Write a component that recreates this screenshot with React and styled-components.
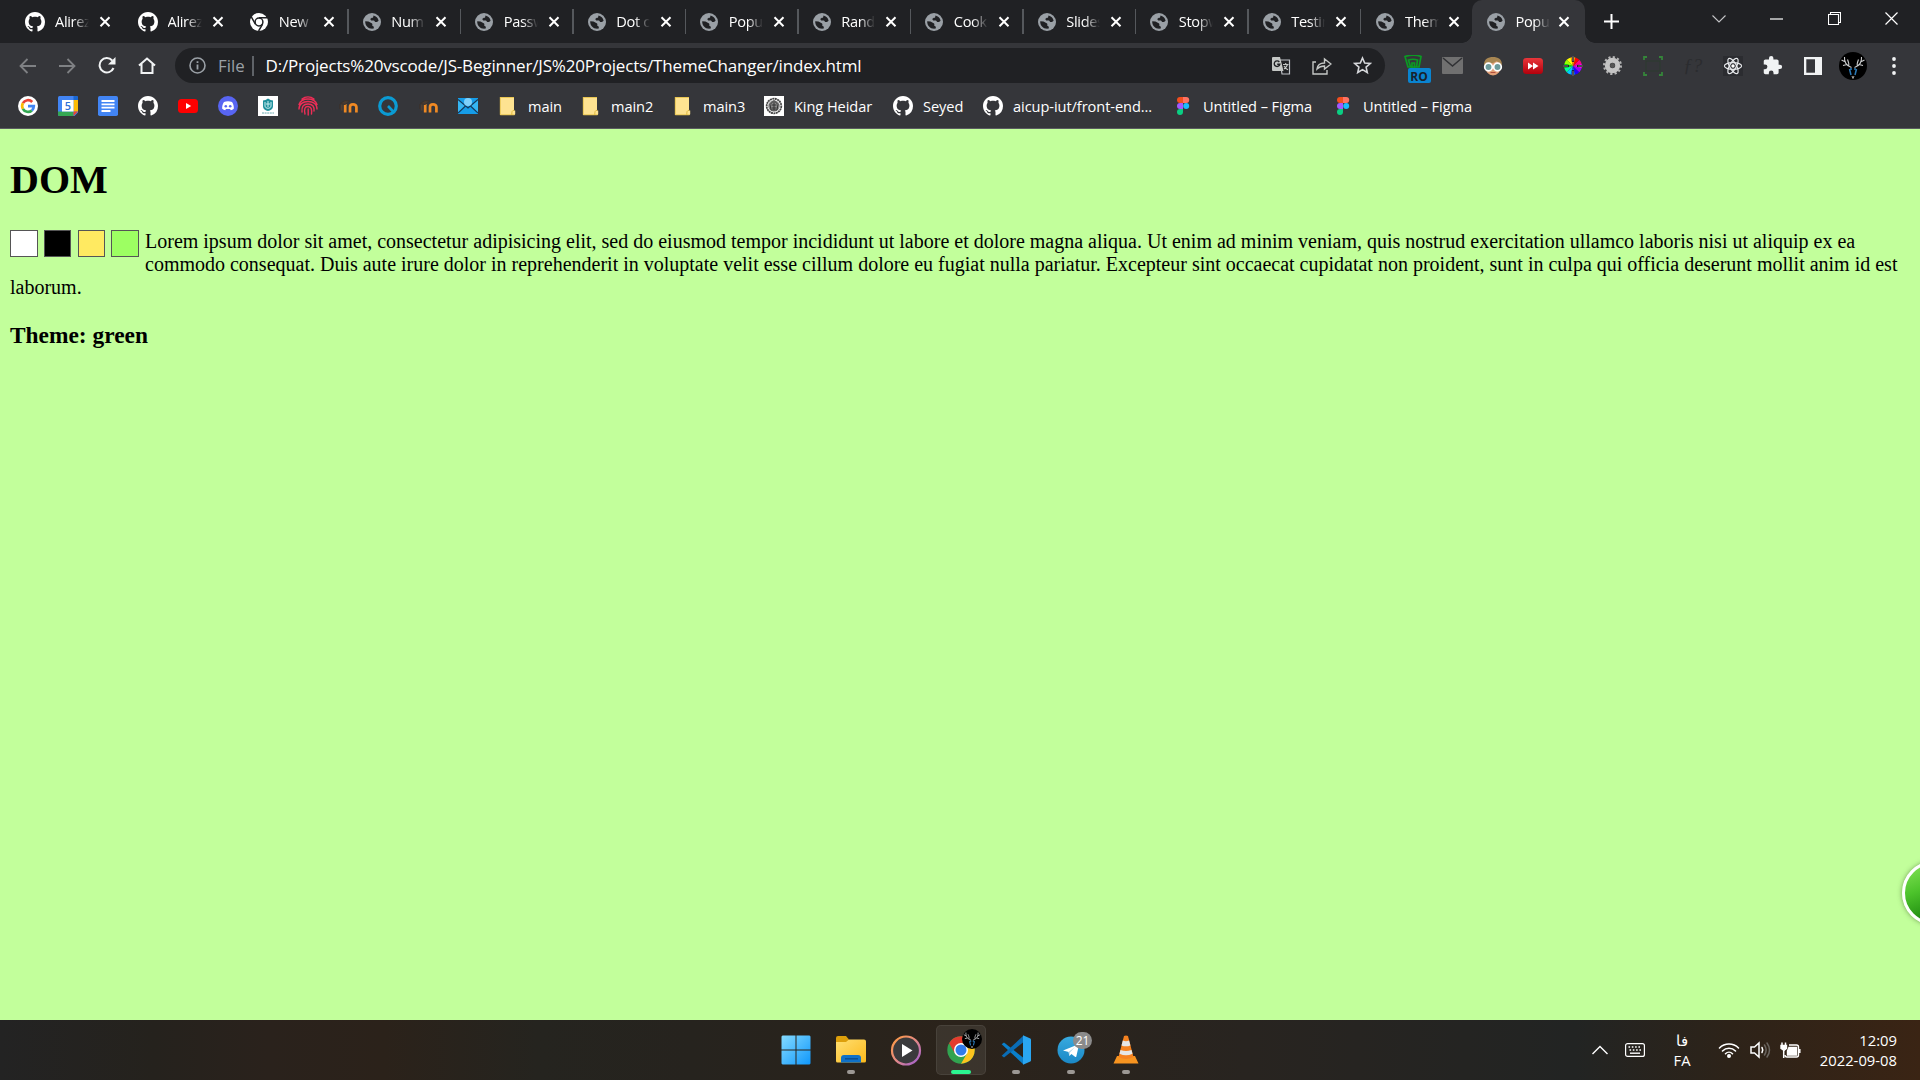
import React from "react";
import styled, { createGlobalStyle } from "styled-components";

const Global = createGlobalStyle`
  * { box-sizing: border-box; }
  html, body { margin: 0; padding: 0; overflow: hidden; }
  svg { display: block; flex: none; }
`;

const ui = `"Open Sans", "Noto Sans", sans-serif`;

const Screen = styled.div`
  width: 1920px;
  height: 1080px;
  display: flex;
  flex-direction: column;
  overflow: hidden;
  background: #202124;
  font-family: ${ui};
  color: #fff;
`;

/* ---------- tab strip ---------- */
const TabStrip = styled.div`
  height: 43px;
  flex: none;
  display: flex;
  align-items: stretch;
  padding-left: 11px;
  background: #202124;
`;
const Tab = styled.div`
  width: ${(p) => (p.$active ? 113 : p.$last ? 110.5 : 112.5)}px;
  height: 43px;
  flex: none;
  display: flex;
  align-items: center;
  padding-left: 14px;
  color: #fff;
  background: ${(p) => (p.$active ? "#35363a" : "transparent")};
  border-radius: ${(p) => (p.$active ? "10px 10px 0 0" : "0")};
  position: relative;
  &::before, &::after {
    content: "";
    display: ${(p) => (p.$active ? "block" : "none")};
    position: absolute;
    bottom: 0;
    width: 10px;
    height: 10px;
  }
  &::before { left: -10px; background: radial-gradient(circle at 0 0, transparent 9.5px, #35363a 10px); }
  &::after { right: -10px; background: radial-gradient(circle at 100% 0, transparent 9.5px, #35363a 10px); }
`;
const TabIcon = styled.span`
  width: 20px;
  height: 20px;
  display: flex;
  align-items: center;
  justify-content: center;
`;
const TabTitle = styled.span`
  width: 34px;
  flex: none;
  margin-left: 10px;
  white-space: nowrap;
  font-size: 14.6px;
  letter-spacing: -0.35px;
  line-height: 22px;
  padding-bottom: 2px;
  mask-image: linear-gradient(to right, #000 55%, transparent 100%);
`;
const TabClose = styled.span`
  margin-left: ${(p) => (p.$tight ? 8.5 : 10)}px;
  width: 12px;
`;
const TabDivider = styled.span`
  width: 1.25px;
  height: 25px;
  margin-left: 12.5px;
  background: #55585c;
`;
const NewTab = styled.div`
  width: 54px;
  display: flex;
  align-items: center;
  justify-content: center;
`;
const WindowButtons = styled.div`
  margin-left: auto;
  display: flex;
  height: 37px;
  align-items: center;
`;
const WindowButton = styled.span`
  width: 57.3px;
  display: flex;
  justify-content: center;
`;

/* ---------- toolbar ---------- */
const Toolbar = styled.div`
  height: 45px;
  flex: none;
  display: flex;
  align-items: center;
  background: #35363a;
  padding-left: 7px;
`;
const NavButton = styled.span`
  width: 40px;
  flex: none;
  display: flex;
  justify-content: center;
`;
const Omnibox = styled.div`
  width: 1210px;
  flex: none;
  height: 35px;
  margin-left: 8px;
  border-radius: 18px;
  background: #202124;
  display: flex;
  align-items: center;
  padding: 0 13px 0 14px;
`;
const Scheme = styled.span`
  margin-left: 12px;
  width: 27px;
  color: #9aa0a6;
  white-space: nowrap;
  font-size: 16.8px;
`;
const SchemeBar = styled.span`
  width: 1.5px;
  height: 20px;
  margin: 0 12px 0 7px;
  background: #5f6368;
`;
const Url = styled.span`
  white-space: nowrap;
  font-size: 17px;
  letter-spacing: -0.165px;
`;
const OmniActions = styled.span`
  margin-left: auto;
  display: flex;
  gap: 21px;
  align-items: center;
`;
const Extensions = styled.div`
  display: flex;
  align-items: center;
  flex: none;
  margin-left: 7.7px;
`;
const Extension = styled.span`
  width: 40px;
  display: flex;
  justify-content: ${(p) => (p.$badge ? "flex-end" : "center")};
  padding: ${(p) => (p.$badge ? "7px 2px 0 0" : "0")};
`;
const Avatar = styled.span`
  width: 41px;
  display: flex;
  justify-content: center;
`;

/* ---------- bookmarks ---------- */
const Bookmarks = styled.div`
  height: 41px;
  flex: none;
  display: flex;
  align-items: center;
  gap: 20px;
  padding: 0 0 4px 18px;
  background: #35363a;
  border-bottom: 1px solid #5a5c5f;
`;
const Bookmark = styled.span`
  display: flex;
  align-items: center;
  gap: 10px;
  flex: none;
`;
const BookmarkLabel = styled.span`
  width: ${(p) => p.$w}px;
  white-space: nowrap;
  font-size: 14.6px;
  letter-spacing: -0.07px;
  line-height: 20px;
  padding-bottom: 1px;
`;

/* ---------- web page ---------- */
const Page = styled.main`
  flex: 1;
  background: #c2ff9b;
  color: #000;
  padding: 28px 10px 0;
  font-family: "Liberation Serif", "Times New Roman", serif;
  font-size: 20px;
  overflow: hidden;
  position: relative;
`;
const Heading = styled.h1`
  margin: 0 0 27px;
  font-size: 40px;
  line-height: 46px;
`;
const Swatches = styled.div`
  float: left;
  display: flex;
  gap: 6.25px;
  width: 135px;
  height: 27px;
`;
const Swatch = styled.button`
  width: 27.5px;
  flex: none;
  height: 27px;
  padding: 0;
  border: 1px solid #555;
  background: ${(p) => p.$color};
`;
const Paragraph = styled.p`
  margin: 0 0 23px;
  line-height: 23px;
`;
const ThemeLine = styled.h3`
  margin: 0;
  font-size: 23.4px;
  line-height: 27px;
`;
const FloatingOrb = styled.span`
  position: absolute;
  left: 1902px;
  top: 732px;
  width: 64px;
  height: 64px;
  border-radius: 50%;
  border: 3px solid #fff;
  background: linear-gradient(160deg, #86e458 0%, #4cc32b 40%, #239012 75%);
  box-shadow: 0 0 5px rgba(60, 90, 40, 0.6);
`;

/* ---------- taskbar ---------- */
const Taskbar = styled.footer`
  height: 60px;
  flex: none;
  display: flex;
  align-items: center;
  padding-left: 771px;
  background: linear-gradient(90deg, #232323 0%, #25221d 8%, #2a221c 14%, #2b221a 20%, #25241f 28%, #26231e 36%, #2b231b 50%, #282420 65%, #222423 82%, #2d2319 90%, #3a2414 100%);
`;
const TaskApp = styled.span`
  width: 50px;
  height: 50px;
  margin-right: 5px;
  display: flex;
  flex-direction: column;
  align-items: center;
  position: relative;
  padding-top: 10px;
  border-radius: 5px;
  background: ${(p) => (p.$active ? "rgba(255,255,255,0.08)" : "transparent")};
  box-shadow: ${(p) => (p.$active ? "inset 0 0 0 1px rgba(255,255,255,0.07)" : "none")};
`;
const Running = styled.i`
  position: absolute;
  bottom: 1px;
  width: ${(p) => (p.$active ? 20 : 8)}px;
  height: 4px;
  border-radius: 2px;
  background: ${(p) => (p.$active ? "#2bf590" : "#9c9894")};
`;
const CountBadge = styled.b`
  position: absolute;
  top: 7px;
  left: 27px;
  width: 19px;
  height: 17px;
  border-radius: 9px;
  background: #8b8b8b;
  font-size: 12px;
  font-weight: 400;
  line-height: 17px;
  text-align: center;
`;
const AvatarBadge = styled.b`
  position: absolute;
  top: 4px;
  left: 26px;
`;
const Tray = styled.div`
  margin-left: auto;
  display: flex;
  align-items: center;
  padding-right: 23px;
  height: 60px;
`;
const TrayIcon = styled.span`
  width: ${(p) => p.$w}px;
  display: flex;
  justify-content: center;
`;
const Stack = styled.div`
  width: ${(p) => p.$w}px;
  text-align: ${(p) => p.$align};
  font-size: 14.8px;
  line-height: 20px;
  white-space: nowrap;
  padding-bottom: 1px;
`;

/* ---------- icons ---------- */
const GitHub = ({ s = 20 }) => (
  <svg width={s} height={s} viewBox="0 0 16 16" fill="#fff">
    <path d="M8 0C3.58 0 0 3.58 0 8c0 3.54 2.29 6.53 5.47 7.59.4.07.55-.17.55-.38 0-.19-.01-.82-.01-1.49-2.01.37-2.53-.49-2.69-.94-.09-.23-.48-.94-.82-1.13-.28-.15-.68-.52-.01-.53.63-.01 1.08.58 1.23.82.72 1.21 1.87.87 2.33.66.07-.52.28-.87.51-1.07-1.78-.2-3.64-.89-3.64-3.95 0-.87.31-1.59.82-2.15-.08-.2-.36-1.02.08-2.12 0 0 .67-.21 2.2.82.64-.18 1.32-.27 2-.27s1.36.09 2 .27c1.53-1.04 2.2-.82 2.2-.82.44 1.1.16 1.92.08 2.12.51.56.82 1.27.82 2.15 0 3.07-1.87 3.75-3.65 3.95.29.25.54.73.54 1.48 0 1.07-.01 1.93-.01 2.2 0 .21.15.46.55.38A8.01 8.01 0 0 0 16 8c0-4.42-3.58-8-8-8z" />
  </svg>
);
const Globe = () => (
  <svg width="18" height="18" viewBox="0 0 18 18">
    <circle cx="9" cy="9" r="9" fill="#9aa0a6" />
    <path d="M10.500 2.500c2.500.5 4.600 2.500 5.100 5.200l-1.600 1.300h-1.800L11 7.500H8.200l-1-1.500 1.600-1.200h1.200z" fill="#202124" />
    <path d="M2.200 8.200l3.300.4 3.200 1.600c1 .5.900 1.400.3 2.100l1.800 1.400v1.800C5.800 16.400 2 13 2.200 8.200z" fill="#202124" />
  </svg>
);
const ChromeMono = () => (
  <svg width="18" height="18" viewBox="0 0 18 18">
    <circle cx="9" cy="9" r="9" fill="#fff" />
    <circle cx="9" cy="9" r="3.9" fill="none" stroke="#202124" strokeWidth="1.500" />
    <path d="M9 4.800h8.500M5.400 11.200 1.300 3.800M12.600 11.200 8.600 18" stroke="#202124" strokeWidth="1.500" />
  </svg>
);
const Close = () => (
  <svg width="12" height="12" viewBox="0 0 12 12">
    <path d="M1.500 1.200l9 9M10.500 1.200l-9 9" stroke="#fff" strokeWidth="2" />
  </svg>
);
const Line = ({ w = 20, h = 20, d, c = "#f1f3f4", sw = 2, fill = "none", vb }) => (
  <svg width={w} height={h} viewBox={vb || `0 0 ${w} ${h}`} fill={fill}>
    <path d={d} stroke={c} strokeWidth={sw} />
  </svg>
);
const Info = () => (
  <svg width="17" height="17" viewBox="0 0 17 17" fill="none">
    <circle cx="8.5" cy="8.5" r="7.500" stroke="#9aa0a6" strokeWidth="1.600" />
    <path d="M8.500 7.500v5M8.500 4.300v1.800" stroke="#9aa0a6" strokeWidth="1.800" />
  </svg>
);
const Translate = () => (
  <svg width="19" height="18" viewBox="0 0 19 18">
    <path d="M8 3h9.500v14H10z" fill="#202124" stroke="#bdc1c6" strokeWidth="1.200" />
    <path d="M1 0h7l3.500 14H1a1 1 0 0 1-1-1V1a1 1 0 0 1 1-1z" fill="#c4c7c5" />
    <path d="M7.300 5A2.800 2.800 0 1 0 7.800 7.300H5.200" fill="none" stroke="#202124" strokeWidth="1.400" />
    <path d="M11 7.500h5.500M13.700 6v1.500M15.500 7.500c-.5 2-2 3.500-3.500 4.500M12 9c.8 1.500 2.500 3 4 3.700" fill="none" stroke="#c4c7c5" strokeWidth="1.100" />
  </svg>
);
const Share = () => (
  <svg width="20" height="18" viewBox="0 0 20 18" fill="none" stroke="#c4c7c5" strokeWidth="1.400">
    <path d="M4 5H1v12h14v-4M5 12c.5-4 3-6 7.500-6V2L19 7l-6.500 5V9C9 9 7 10 5 12z" />
  </svg>
);
const Star = () => (
  <svg width="19" height="19" viewBox="0 0 19 19" fill="none" stroke="#d5d7da" strokeWidth="1.600">
    <path d="M9.500 2l2.200 5 5.500.5-4.100 3.600 1.200 5.400-4.800-2.900-4.800 2.900 1.200-5.400L1.800 7.500l5.500-.5z" />
  </svg>
);
const Sniffer = () => (
  <svg width="27" height="28" viewBox="0 0 27 28">
    <path d="M1 1.500c5-1.500 12-1.500 16 0l-2 10.500H4zM4.500 5c3-1 6-1 9 0l-1 7h-6zM8 13V8h2.500v5" fill="none" stroke="#0b9b24" strokeWidth="1.700" />
    <rect x="4" y="13" width="23" height="15" rx="2" fill="#0a84d0" />
    <text x="15" y="25.500" textAnchor="middle" fontSize="12" fontWeight="700" fontFamily="Open Sans" fill="#18222c">RO</text>
  </svg>
);
const Mail = () => (
  <svg width="21" height="17" viewBox="0 0 21 17">
    <rect width="21" height="17" rx="1" fill="#707070" />
    <path d="M1 1l9.500 8L20 1" fill="none" stroke="#303134" strokeWidth="1.500" />
  </svg>
);
const Face = () => (
  <svg width="20" height="20" viewBox="0 0 20 20">
    <ellipse cx="10" cy="10.500" rx="8" ry="9" fill="#e3a077" />
    <path d="M1 9C1 3 5 1 10 1s9 2 9 8l-3-1-2-3-4 2-5 1z" fill="#a78652" />
    <circle cx="5.500" cy="11" r="3.800" fill="#6d9b9b" stroke="#fff" strokeWidth="1.700" />
    <circle cx="14.500" cy="11" r="3.800" fill="#6d9b9b" stroke="#fff" strokeWidth="1.700" />
    <path d="M7.500 16.500h5" stroke="#b34f3e" />
  </svg>
);
const FastForward = () => (
  <svg width="20" height="16" viewBox="0 0 20 16">
    <defs><linearGradient id="ff" x2="0" y2="1"><stop stopColor="#e8363a" /><stop offset="1" stopColor="#b3000c" /></linearGradient></defs>
    <rect width="20" height="16" rx="3.500" fill="url(#ff)" />
    <path d="M5 4.500l5 3.500-5 3.500zM10 4.500l5.500 3.500-5.500 3.500z" fill="#fff" />
  </svg>
);
const wheelColors = ["#ff0", "#9f0", "#0e0", "#0f9", "#0cf", "#06f", "#20f", "#90f", "#f0f", "#f08", "#f00", "#f90"];
const ColorWheel = () => (
  <svg width="20" height="20" viewBox="-10 -10 20 20">
    {wheelColors.map((c, i) => (
      <path key={c} d="M0 0L-2.300 -8.600A9 9 0 0 1 2.300 -8.600z" fill={c} transform={`rotate(${-30 * i - 30})`} />
    ))}
    <path d="M0-10v6M0 10V4M-10 0h6M10 0H4" stroke="#222" strokeWidth="1.800" />
    <path d="M0-10v5M0 10V5M-10 0h5M10 0H5" stroke="#bbb" strokeWidth=".6" />
  </svg>
);
const Gear = () => (
  <svg width="19" height="19" viewBox="-9.500 -9.500 19 19">
    <circle r="8.400" fill="none" stroke="#b5b5b5" strokeWidth="2.200" strokeDasharray="2.200 2.200" />
    <circle r="5.200" fill="none" stroke="#c4c4c4" strokeWidth="5" />
    <circle r="2.400" fill="#555" />
  </svg>
);
const Corners = () => (
  <svg width="20" height="20" viewBox="0 0 20 20" fill="none">
    <path d="M1 4V1h3M16 1h3v3M19 16v3h-3M4 19H1v-3" stroke="#35843a" strokeWidth="1.800" />
    <rect x="3" y="5" width="14" height="10" stroke="#2c3a2f" strokeWidth="1" />
  </svg>
);
const FnText = styled.em`
  font: italic 19px "Liberation Serif", serif;
  color: #2b2c2f;
`;
const ReactLogo = () => (
  <svg width="20" height="20" viewBox="-10 -10 20 20">
    <rect x="-10" y="-10" width="20" height="20" fill="#2b2c30" />
    <g fill="none" stroke="#e8eaed" strokeWidth="1.200">
      <ellipse rx="8.600" ry="3.300" />
      <ellipse rx="8.600" ry="3.300" transform="rotate(60)" />
      <ellipse rx="8.600" ry="3.300" transform="rotate(120)" />
    </g>
    <circle r="1.700" fill="#fff" />
  </svg>
);
const Puzzle = () => (
  <svg width="21" height="21" viewBox="0 0 24 24" fill="#f1f3f4">
    <path d="M20.500 11H19V7c0-1.100-.9-2-2-2h-4V3.500a2.500 2.500 0 0 0-5 0V5H4c-1.100 0-2 .9-2 2v3.800h1.500a2.700 2.700 0 0 1 0 5.400H2V20c0 1.100.9 2 2 2h3.800v-1.500a2.700 2.700 0 0 1 5.400 0V22H17c1.100 0 2-.9 2-2v-4h1.500a2.500 2.500 0 0 0 0-5z" />
  </svg>
);
const SidePanel = () => (
  <svg width="18" height="18" viewBox="0 0 18 18">
    <rect width="18" height="18" fill="#f1f3f4" />
    <rect x="2.300" y="2.300" width="8.700" height="13.400" fill="#35363a" />
  </svg>
);
const Deer = ({ s = 28 }) => (
  <svg width={s} height={s} viewBox="0 0 28 28" fill="none">
    <circle cx="14" cy="14" r="14" fill="#000" />
    <path d="M12.500 15.500C8 14 5 11 5.500 5M6.500 10L2.500 8M8 12.500L4 13.500M9.500 14c1-2 0-4-1-6.500M15.500 15.500c4.500-1.500 7.500-4.500 7-10.500M21.500 10l4-2M20 12.500l4 1M18.500 14c-1-2 0-4 1-6.500" stroke="#c9cbcc" strokeWidth="1.100" />
    <path d="M10.500 17l1.500 6M17.500 17L16 23M11 17h2M15 17h2" stroke="#2a7ab8" strokeWidth="1.500" />
    <path d="M13 24l1 2.500 1-2.500" stroke="#aaa" />
  </svg>
);
const Dots = () => (
  <svg width="4" height="18" viewBox="0 0 4 18" fill="#f1f3f4">
    <circle cx="2" cy="2" r="1.900" /><circle cx="2" cy="9" r="1.900" /><circle cx="2" cy="16" r="1.900" />
  </svg>
);
const Google = () => (
  <svg width="20" height="20" viewBox="0 0 20 20">
    <circle cx="10" cy="10" r="10" fill="#fff" />
    <g fill="none" strokeWidth="2.700">
      <path d="M4.900 7.200A5.800 5.800 0 0 1 14.200 6" stroke="#ea4335" />
      <path d="M4.900 7.200a5.800 5.800 0 0 0 0 5.600" stroke="#fbbc05" />
      <path d="M4.900 12.800a5.800 5.800 0 0 0 9 1.600" stroke="#34a853" />
      <path d="M10 10.200h5.800a5.800 5.800 0 0 1-1.900 4.200" stroke="#4285f4" />
    </g>
  </svg>
);
const Calendar = () => (
  <svg width="20" height="20" viewBox="0 0 20 20">
    <rect width="20" height="20" rx="1.500" fill="#4285f4" />
    <path d="M15.500 0H18.500a1.500 1.500 0 0 1 1.500 1.500V4h-4.500z" fill="#1967d2" />
    <path d="M15.500 4H20v11.500h-4.500z" fill="#fbbc04" />
    <path d="M0 15.500h15.500V20H1.500A1.500 1.500 0 0 1 0 18.500z" fill="#34a853" />
    <path d="M15.500 15.500H20L15.500 20z" fill="#ea4335" />
    <path d="M16.500 20L20 16.500V20z" fill="#35363a" />
    <rect x="4" y="4" width="11.500" height="11.500" fill="#fff" />
    <text x="9.800" y="13.800" textAnchor="middle" fontSize="11" fontWeight="600" fontFamily="Open Sans" fill="#2f6fd6">5</text>
  </svg>
);
const Docs = () => (
  <svg width="20" height="20" viewBox="0 0 20 20">
    <rect width="20" height="20" rx="1.800" fill="#4285f4" />
    <path d="M3.500 5h13M3.500 8.300h13M3.500 11.700h13M3.500 15h9" stroke="#fff" strokeWidth="1.800" />
  </svg>
);
const YouTube = () => (
  <svg width="20" height="20" viewBox="0 0 20 20">
    <rect y="3" width="20" height="14" rx="3.500" fill="#f00" />
    <path d="M8 7l5.200 3L8 13z" fill="#fff" />
  </svg>
);
const Discord = () => (
  <svg width="20" height="20" viewBox="0 0 20 20">
    <circle cx="10" cy="10" r="10" fill="#5865f2" />
    <path d="M6 6c2.500-1 5.500-1 8 0 1.400 2 2 4.300 1.800 6.800-1 .9-2 1.300-3 1.500l-.8-1.300H8l-.8 1.300c-1-.2-2-.6-3-1.500C4 10.300 4.600 8 6 6z" fill="#fff" />
    <circle cx="7.800" cy="10.200" r="1.300" fill="#5865f2" /><circle cx="12.200" cy="10.200" r="1.300" fill="#5865f2" />
  </svg>
);
const Crest = () => (
  <svg width="20" height="20" viewBox="0 0 20 20">
    <rect width="20" height="20" fill="#fff" />
    <path d="M5 4.500l2.500-.5L10 2.500 12.500 4l2.500.5v6c0 2.500-2.500 4-5 4.500-2.500-.5-5-2-5-4.500z" fill="#20909c" />
    <path d="M7 6v4c0 3 6 3 6 0V6M10 5v6M8 8h4" stroke="#c9eef0" fill="none" />
    <path d="M4 17h12" stroke="#6aa9af" strokeDasharray="2 .6" />
  </svg>
);
const Fingerprint = () => (
  <svg width="20" height="20" viewBox="0 0 20 20" fill="none" stroke="#ef2d56" strokeWidth="1.400" strokeLinecap="round">
    <path d="M4 3a9.500 9.500 0 0 1 12 0M1 8.500c1.500-4 5-5.500 9-5.500s7.500 1.500 9 5.500M1 13c0-5 4-7.500 9-7.500s9 2.500 9 7.500M4 16c-.5-5 1-8 6-8s6.500 3 6 7M7 18c-1-5-.3-7.500 3-7.500s4 3 3.500 7.500M10.200 13v6" />
  </svg>
);
const Moodle = () => (
  <svg width="20" height="20" viewBox="0 0 20 20" fill="none">
    <path d="M12 16.500V11q0-2.600 3-2.600t3.400 2.600v5.500M7.200 8v8.500" stroke="#f08a24" strokeWidth="2.700" />
    <path d="M2 7.500l5-3L12 5 7 8.500zM1.500 8v5" stroke="#39322e" fill="#4a3b31" strokeWidth="1" />
    <path d="M3.700 8.500v6" stroke="#56402f" strokeWidth="1.800" />
  </svg>
);
const QLogo = () => (
  <svg width="20" height="20" viewBox="0 0 20 20" fill="none" stroke="#0b9bd3">
    <circle cx="10" cy="10" r="8.300" strokeWidth="3.200" />
    <path d="M10 10l6.500 7" strokeWidth="2.600" />
  </svg>
);
const MailBlue = () => (
  <svg width="20" height="20" viewBox="0 0 20 20">
    <rect y="2" width="20" height="16" fill="#169de8" />
    <path d="M0 3l8 7-8 7zM20 3l-8 7 8 7z" fill="#35b6f3" />
    <path d="M0 3.500L10 12l10-8.500M0 17l7.500-7M20 17l-7.500-7" stroke="#15395b" strokeWidth="1.200" fill="none" />
    <circle cx="10" cy="6" r="4" fill="#7fd0fa" />
  </svg>
);
const FolderDoc = () => (
  <svg width="20" height="20" viewBox="0 0 20 20">
    <path d="M2 1h14v13.500h1.200V18a1 1 0 0 1-1 1H2z" fill="#fee391" />
    <path d="M2 1.500h14M2.300 1v17.800H16.500" stroke="#e6c34c" fill="none" strokeWidth=".9" />
    <path d="M16.300 14.300c-2.300 0-2.500 1.200-2.500 4.500" stroke="#e0b93c" fill="none" />
  </svg>
);
const Seal = () => (
  <svg width="20" height="20" viewBox="0 0 20 20" fill="none">
    <rect width="20" height="20" fill="#fff" />
    <circle cx="10" cy="10" r="7.300" stroke="#444" strokeWidth="1.800" strokeDasharray="2 .5" />
    <circle cx="10" cy="10" r="5.800" fill="#888" />
    <path d="M10 4.500l4 4-1 5.500H7L6 8.500zM10 6v8M7.500 9h5M7.500 12h5" stroke="#333" />
  </svg>
);
const Figma = () => (
  <svg width="20" height="20" viewBox="0 0 20 20">
    <path d="M10 1H7a3 3 0 0 0 0 6h3z" fill="#f24e1e" /><path d="M10 1h3.200a3 3 0 0 1 0 6H10z" fill="#ff7262" />
    <path d="M10 7H7a3 3 0 0 0 0 6h3z" fill="#a259ff" /><circle cx="13.200" cy="10" r="3" fill="#1abcfe" />
    <path d="M10 13H7a3 3 0 1 0 3 3z" fill="#0acf83" />
  </svg>
);
const WinLogo = () => (
  <svg width="30" height="30" viewBox="0 0 30 30">
    <defs><linearGradient id="wn" gradientUnits="userSpaceOnUse" x1="0" y1="0" x2="30" y2="30"><stop stopColor="#87dcff" /><stop offset="1" stopColor="#0d96fb" /></linearGradient></defs>
    <path d="M1.500.5h13v14H.5v-13zM15.500.5h13l1 1v13h-14zM.5 15.500h14v14h-13l-1-1zM15.500 15.500h14v13l-1 1h-13z" fill="url(#wn)" />
  </svg>
);
const Explorer = () => (
  <svg width="32" height="30" viewBox="0 0 32 30">
    <defs><linearGradient id="ex" x2="1" y2="1"><stop stopColor="#ffdf71" /><stop offset="1" stopColor="#fbb91c" /></linearGradient></defs>
    <path d="M1 3q0-2 2-2h8l3 3.500V8H1z" fill="#dd9f0b" />
    <path d="M1 7h10l3-2.500h15q2 0 2 2V26q0 1.500-1.500 1.500h-27Q1 27.500 1 26z" fill="url(#ex)" />
    <path d="M6 27.500V23q0-3 3-3h14q3 0 3 3v4.500z" fill="#0f71c8" />
    <path d="M10 23.800h13" stroke="#0a4d92" strokeWidth="1.500" />
  </svg>
);
const Player = () => (
  <svg width="32" height="32" viewBox="0 0 32 32">
    <defs><linearGradient id="pl" x1="0" y1="0" x2="1" y2="1"><stop stopColor="#ff9b3d" /><stop offset=".5" stopColor="#e58a86" /><stop offset="1" stopColor="#9a5bd6" /></linearGradient></defs>
    <circle cx="16" cy="15.500" r="14" fill="#3a3a3c" stroke="url(#pl)" strokeWidth="2.200" />
    <path d="M12 9l10.500 6.500L12 22z" fill="#fff" />
  </svg>
);
const Chrome = () => (
  <svg width="30" height="30" viewBox="0 0 30 30">
    <circle cx="15" cy="15" r="13.700" fill="#31a350" />
    <path d="M3.100 8.200A13.700 13.700 0 0 1 26.900 8.200L15 8.200 9 18.500z" fill="#e33b2e" />
    <path d="M26.900 8.200A13.700 13.700 0 0 1 15 28.700L21 18.500 15 8.200z" fill="#fcc31e" />
    <circle cx="15" cy="15" r="7" fill="#fff" /><circle cx="15" cy="15" r="5.500" fill="#317bea" />
  </svg>
);
const VSCode = () => (
  <svg width="30" height="30" viewBox="0 0 30 30">
    <path d="M.7 9.200L3 7.500l19 15V29z" fill="#0a7fcb" />
    <path d="M.7 20.800L3 22.500l19-15V1z" fill="#0a6cb5" />
    <path d="M22 .2l7.300 3.300q.7.400.7 1.200v20.600q0 .8-.7 1.200L22 29.800z" fill="#2aa6f2" />
  </svg>
);
const Telegram = () => (
  <svg width="28" height="30" viewBox="0 0 28 30">
    <defs><linearGradient id="tg" x2="0" y2="1"><stop stopColor="#38aadf" /><stop offset="1" stopColor="#1b88c6" /></linearGradient></defs>
    <circle cx="14" cy="15" r="13.500" fill="url(#tg)" />
    <path d="M6 15.500L21 9.500q1-.3.800.9l-2.500 11q-.3 1-1.300.4l-3.600-2.700-2 1.900-.7-4z" fill="#fff" />
    <path d="M11.500 17l6.500-5-5 5.500-.7 3.500z" fill="#b5d8eb" />
  </svg>
);
const Vlc = () => (
  <svg width="26" height="30" viewBox="0 0 26 30">
    <path d="M4 21h18l3.500 7.500H.5z" fill="#f79420" />
    <path d="M11 1q2-1 4 0l5.500 21q-7.500 4-15 0z" fill="#f58220" />
    <path d="M9.800 5.500q3.200 1.300 6.300 0l1.300 5q-4.400 1.700-8.900 0zM7.500 15q5.500 2.200 11 0l1 3.800q-6.500 3-13 0z" fill="#e6e6e6" />
  </svg>
);
const Keyboard = () => (
  <svg width="20" height="14" viewBox="0 0 20 14" fill="none" stroke="#fff">
    <rect x=".6" y=".6" width="18.800" height="12.800" rx="2" strokeWidth="1.200" />
    <path d="M3.500 4h13M4.500 7h12" strokeWidth="1.600" strokeDasharray="1.600 1.700" />
    <path d="M5 10.200h10" strokeWidth="1.400" />
  </svg>
);
const Wifi = () => (
  <svg width="22" height="16" viewBox="0 0 22 16" fill="none" stroke="#fff" strokeWidth="1.600" strokeLinecap="round">
    <path d="M1.500 6a13.400 13.400 0 0 1 19 0M4.500 9a9.200 9.200 0 0 1 13 0M7.500 11.700a5 5 0 0 1 7 0" />
    <circle cx="11" cy="14" r="1.200" fill="#fff" />
  </svg>
);
const Volume = () => (
  <svg width="21" height="18" viewBox="0 0 21 18" fill="none" stroke="#fff" strokeWidth="1.500" strokeLinecap="round">
    <path d="M1 6h3.500L9 2v14l-4.500-4H1z" />
    <path d="M12 6.500q1.500 2.500 0 5" />
    <path d="M14.500 4q3.300 5 0 10M17 2q5 7 0 14" stroke="#6a655f" />
  </svg>
);
const Battery = () => (
  <svg width="21" height="17" viewBox="0 0 21 17" fill="none" stroke="#fff" strokeWidth="1.400">
    <path d="M9 3h7.500q2 0 2 2v8q0 2-2 2H7q-2 0-2-2" />
    <path d="M9 5.500h7.500V13H7.500V9z" fill="#fff" />
    <path d="M19.800 7v4M2 .5v3M5.500.5v3M3.700 8v8" strokeWidth="1.500" />
    <path d="M1 3.500h5.500v3L4 8.500 1 6.500z" fill="#fff" />
  </svg>
);

const tabs = ["Alirez", "Alirez", "New", "Num", "Passw", "Dot c", "Popu", "Rand", "Cook", "Slides", "Stopw", "Testin", "Them", "Popu"];
const iconMarks = [Google, Calendar, Docs, GitHub, YouTube, Discord, Crest, Fingerprint, Moodle, QLogo, Moodle, MailBlue];
const textMarks = [
  [FolderDoc, "main", 33], [FolderDoc, "main2", 42], [FolderDoc, "main3", 41], [Seal, "King Heidar", 79],
  [GitHub, "Seyed", 40], [GitHub, "aicup-iut/front-end...", 140], [Figma, "Untitled – Figma", 110], [Figma, "Untitled – Figma", 110],
];
const extensions = [Sniffer, Mail, Face, FastForward, ColorWheel, Gear, Corners, () => <FnText>ƒ?</FnText>, ReactLogo, Puzzle, SidePanel];
const swatches = ["#ffffff", "#000000", "#ffea61", "#9dff62"];

export default function App() {
  return (
    <Screen>
      <Global />
      <TabStrip>
        {tabs.map((title, i) => {
          const active = i === 13;
          return (
            <Tab key={i} $active={active} $last={i === 12}>
              <TabIcon>{i < 2 ? <GitHub /> : i === 2 ? <ChromeMono /> : <Globe />}</TabIcon>
              <TabTitle>{title}</TabTitle>
              <TabClose $tight={i > 11}><Close /></TabClose>
              {i < 12 && <TabDivider />}
            </Tab>
          );
        })}
        <NewTab><Line w={15} h={15} d="M7.500 0v15M0 7.500h15" c="#fff" /></NewTab>
        <WindowButtons>
          <WindowButton><Line w={14} h={8} d="M.5.5l6.500 6.500 6.500-6.500" c="#c5c6c8" sw={1.1} /></WindowButton>
          <WindowButton><Line w={13} h={2} d="M0 1h13" c="#fff" sw={1.2} /></WindowButton>
          <WindowButton><Line w={13} h={13} d="M.5 2.500h10v10H.5zM2.500 2.500v-2h10v10h-2" c="#fff" sw={1.1} /></WindowButton>
          <WindowButton><Line w={13} h={13} d="M.5.5l12 12M12.500.5l-12 12" c="#fff" sw={1.2} /></WindowButton>
        </WindowButtons>
      </TabStrip>

      <Toolbar>
        <NavButton><Line w={17} h={16} d="M17 8H1.500M8.500 1l-7 7 7 7" c="#7f8184" sw={1.8} /></NavButton>
        <NavButton><Line w={17} h={16} d="M0 8h15.500M8.500 1l7 7-7 7" c="#7f8184" sw={1.8} /></NavButton>
        <NavButton>
          <svg width="18" height="17" viewBox="0 0 18 17">
            <path d="M14.200 3.500A7.200 7.200 0 1 0 15.500 11" fill="none" stroke="#f1f3f4" strokeWidth="2" />
            <path d="M17.500 0v7.500H10z" fill="#f1f3f4" />
          </svg>
        </NavButton>
        <NavButton><Line w={18} h={17} d="M1 8.500L9 1.500l8 7M3.500 7v9h11V7" sw={2} /></NavButton>
        <Omnibox>
          <Info />
          <Scheme>File</Scheme>
          <SchemeBar />
          <Url>D:/Projects%20vscode/JS-Beginner/JS%20Projects/ThemeChanger/index.html</Url>
          <OmniActions><Translate /><Share /><Star /></OmniActions>
        </Omnibox>
        <Extensions>
          {extensions.map((Icon, i) => <Extension key={i} $badge={i === 0}><Icon /></Extension>)}
          <Avatar><Deer /></Avatar>
          <Extension><Dots /></Extension>
        </Extensions>
      </Toolbar>

      <Bookmarks>
        {iconMarks.map((Icon, i) => <Bookmark key={i}><Icon /></Bookmark>)}
        {textMarks.map(([Icon, label, w], i) => (
          <Bookmark key={i}><Icon /><BookmarkLabel $w={w}>{label}</BookmarkLabel></Bookmark>
        ))}
      </Bookmarks>

      <Page>
        <Heading>DOM</Heading>
        <Swatches>{swatches.map((c) => <Swatch key={c} $color={c} />)}</Swatches>
        <Paragraph>
          Lorem ipsum dolor sit amet, consectetur adipisicing elit, sed do eiusmod tempor incididunt ut labore et dolore magna aliqua. Ut enim ad minim veniam, quis nostrud exercitation ullamco laboris nisi ut aliquip ex ea commodo consequat. Duis aute irure dolor in reprehenderit in voluptate velit esse cillum dolore eu fugiat nulla pariatur. Excepteur sint occaecat cupidatat non proident, sunt in culpa qui officia deserunt mollit anim id est laborum.
        </Paragraph>
        <ThemeLine>Theme: green</ThemeLine>
        <FloatingOrb />
      </Page>

      <Taskbar>
        <TaskApp><WinLogo /></TaskApp>
        <TaskApp><Explorer /><Running /></TaskApp>
        <TaskApp><Player /></TaskApp>
        <TaskApp $active><Chrome /><AvatarBadge><Deer s={20} /></AvatarBadge><Running $active /></TaskApp>
        <TaskApp><VSCode /><Running /></TaskApp>
        <TaskApp><Telegram /><CountBadge>21</CountBadge><Running /></TaskApp>
        <TaskApp><Vlc /><Running /></TaskApp>
        <Tray>
          <TrayIcon $w={36}><Line w={16} h={10} d="M.5 9L8 1.500 15.500 9" c="#fff" sw={1.4} /></TrayIcon>
          <TrayIcon $w={34}><Keyboard /></TrayIcon>
          <Stack $w={60} $align="center"><div>فا</div><div>FA</div></Stack>
          <TrayIcon $w={34}><Wifi /></TrayIcon>
          <TrayIcon $w={28}><Volume /></TrayIcon>
          <TrayIcon $w={32}><Battery /></TrayIcon>
          <Stack $w={91} $align="right"><div>12:09</div><div>2022-09-08</div></Stack>
        </Tray>
      </Taskbar>
    </Screen>
  );
}
